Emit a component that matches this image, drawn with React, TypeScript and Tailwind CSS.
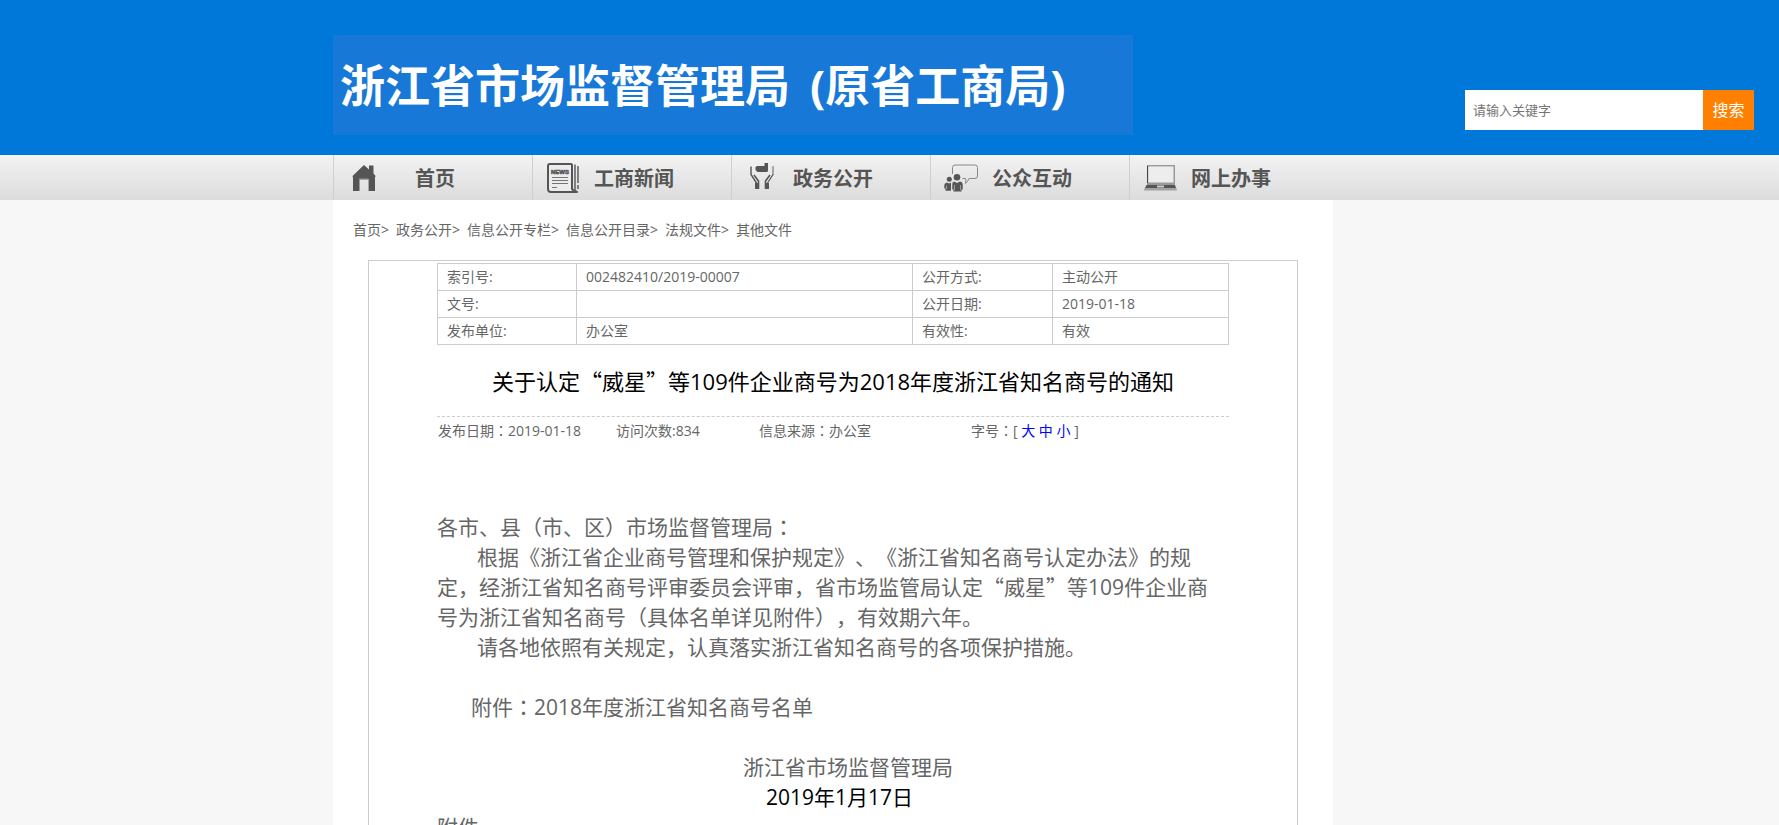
import React from "react";

const SANS = "font-['Open_Sans','Noto_Sans_CJK_SC',sans-serif]";

const HomeIcon = () => (
  <svg width="24" height="26" viewBox="0 0 24 26" fill="#555">
    <path d="M12 0 L17 4.5 V0.5 H21.5 V8.5 L24 11.5 H23 V26 H16.5 V14.5 H7.5 V26 H1 V11.5 H0 Z" />
    <path d="M7 14 H16.5 V26" fill="none" stroke="#aaa" strokeWidth="0.8" />
  </svg>
);

const NewsIcon = () => (
  <svg width="32" height="30" viewBox="0 0 32 30" fill="none" stroke="#555">
    <path d="M3 1 H24 Q25 1 25 2 V26 L28 29 H4 Q1 29 1 26 V3 Q1 1 3 1 Z" strokeWidth="2" fill="#ececec" />
    <path d="M28 1.5 V27 L30 29 M31 3 V20 M31 22 V26 M25 29 H31" strokeWidth="1.4" />
    <path d="M5 14.5 H21 M5 17.5 H21 M5 20.5 H21 M5 24.5 H10" strokeWidth="1.2" stroke="#777" />
    <text
      x="4"
      y="11"
      fontSize="6"
      fontWeight="bold"
      fontFamily="'Liberation Sans', sans-serif"
      fill="#555"
      strokeWidth="0.5"
    >
      NEWS
    </text>
  </svg>
);

const HandsIcon = () => (
  <svg width="24" height="30" viewBox="0 0 24 30" fill="#555">
    <path d="M7 3 H14.5 V0 H18 V8 L17 9 H7.5 L5.5 7 V4 Z" />
    <path d="M5 20 H9.3 V26 H5 Z M14.7 20 H19 V26 H14.7 Z" />
    <path d="M1 3.5 V11.5 L6.5 20" fill="none" stroke="#555" strokeWidth="1.4" />
    <path d="M23 3.5 V11.5 L17.5 20" fill="none" stroke="#555" strokeWidth="1.2" />
    <path d="M23 3 V11" fill="none" stroke="#aaa" strokeWidth="1.6" />
    <path d="M4 12 L8.5 18 V20 M20 12 L15.5 18 V20" fill="none" stroke="#555" strokeWidth="1.6" />
  </svg>
);

const PeopleIcon = () => (
  <svg width="34" height="28" viewBox="0 0 34 28" fill="#555">
    <path
      d="M8.5 10 V3.5 Q8.5 1 11 1 H31 Q33.5 1 33.5 3.5 V12 Q33.5 14.5 31 14.5 H25 Q24 17.5 21.5 19.5 Q22.5 17 21.5 14.5 H18.5"
      fill="none"
      stroke="#888"
    />
    <circle cx="13" cy="13.3" r="3.3" />
    <circle cx="5.3" cy="15.3" r="2.5" />
    <path d="M10 17.5 L13 19 L16 17.5 Q18.7 18 18.7 20 V25.5 H17.5 V27.5 H9.5 V25.5 H8.3 V20 Q8.3 18 10 17.5 Z" />
    <path d="M3 18.5 L5 19.5 L7 18.5 V26.8 H1.5 V24.5 H0.3 V21 Q0.3 19 3 18.5 Z" />
    <path d="M10.5 21 V26 M16.5 21 V26 M2.5 21.5 V25" stroke="#bbb" strokeWidth="0.7" />
  </svg>
);

const LaptopIcon = () => (
  <svg width="33" height="26" viewBox="0 0 33 26">
    <path d="M3 0 H31 V20 H3 Z" fill="#999" />
    <path d="M3 1 H4.2 V18 H3 Z" fill="#444" />
    <path d="M4.2 1.4 H29.5 V17.5 H4.2 Z" fill="#ededed" />
    <path d="M2.5 20 H31 L32 23 H1 Z" fill="#555" />
    <path d="M13 20.5 H20 V22.5 H13 Z" fill="#ccc" />
    <path d="M0.5 23 H32.5 L33 25.5 H0 Z" fill="#a2a2a2" />
  </svg>
);

const navItems = [
  { label: "首页", icon: <HomeIcon /> },
  { label: "工商新闻", icon: <NewsIcon /> },
  { label: "政务公开", icon: <HandsIcon /> },
  { label: "公众互动", icon: <PeopleIcon /> },
  { label: "网上办事", icon: <LaptopIcon /> },
];

const crumbs = ["首页", "政务公开", "信息公开专栏", "信息公开目录", "法规文件", "其他文件"];

const info = [
  ["索引号:", "002482410/2019-00007", "公开方式:", "主动公开"],
  ["文号:", "", "公开日期:", "2019-01-18"],
  ["发布单位:", "办公室", "有效性:", "有效"],
];

// Quotes need the full-width CJK glyphs, colons the centred ones
const Zh = ({ children }: { children: string }) => (
  <>
    {children.split(/([“”：])/).map((part, i) => {
      if (part === "“" || part === "”") {
        return <span key={i} className="font-['Noto_Sans_CJK_SC',sans-serif] leading-none">{part}</span>;
      }
      if (part === "：") {
        return <span key={i} lang="zh-TW" className="font-['Noto_Sans_CJK_TC',sans-serif] leading-none">{part}</span>;
      }
      return part;
    })}
  </>
);

const App = () => {
  return (
    <div lang="zh-CN" className={`min-h-screen bg-[#f7f7f7] text-sm text-[#666] [text-spacing-trim:space-all] ${SANS}`}>
      <header className="relative bg-[#0078d9] pt-[35px] pr-[113px] pb-5">
        <div className="mx-auto w-full max-w-[1000px]">
          <h1 className="flex h-[100px] max-w-[800px] items-center bg-[#1778d8] pt-0.5 pl-[7px] text-[45px] font-bold whitespace-nowrap text-white">
            浙江省市场监督管理局
            <span className="ml-5">(原省工商局)</span>
          </h1>
        </div>
        <form className="absolute top-[90px] right-[25px] flex h-10" onSubmit={(e) => e.preventDefault()}>
          <input
            type="text"
            aria-label="请输入关键字"
            placeholder="请输入关键字"
            className="w-[238px] bg-white px-2 text-[13px] placeholder:text-[#757575]"
          />
          <button type="submit" className="w-[51px] bg-[#ff8000] text-base text-white">搜索</button>
        </form>
      </header>

      <nav className="bg-linear-to-b from-[#f3f3f3] to-[#dcdcdc] pr-[113px]">
        <ul className="mx-auto flex w-full max-w-[1000px]">
          {navItems.map((item) => (
            <li key={item.label} className="w-[199px] border-l border-[#cfcfcf]">
              <a href="#" className="flex h-[45px] items-center pl-3 text-xl font-bold text-[#555]">
                <span className="flex w-9 justify-center">{item.icon}</span>
                <span className="w-[106px] pt-0.5 text-center">{item.label}</span>
              </a>
            </li>
          ))}
        </ul>
      </nav>

      <div className="pr-[113px]">
        <main className="mx-auto w-full max-w-[1000px] bg-white px-[35px] pt-5">
          <div className="-ml-[15px] flex h-5 items-center gap-[7px]">
            {crumbs.map((crumb, i) => (
              <span key={crumb}>
                <a href="#">{crumb}</a>
                {i < crumbs.length - 1 && ">"}
              </span>
            ))}
          </div>

          <article className="mt-5 border border-[#ccc] px-[68px] pt-0.5">
            <table className="w-full table-fixed border-collapse">
              <colgroup>
                <col className="w-[139px]" />
                <col />
                <col className="w-[140px]" />
                <col className="w-[176px]" />
              </colgroup>
              <tbody>
                {info.map((row) => (
                  <tr key={row[0]} className="h-[27px]">
                    {row.map((cell, i) => (
                      <td key={i} className="border border-[#ccc] px-[9px] leading-5">{cell}</td>
                    ))}
                  </tr>
                ))}
              </tbody>
            </table>

            <h2 className="mt-[19px] mb-[18px] text-center text-[22px] leading-[34px] text-black">
              <Zh>关于认定“威星”等109件企业商号为2018年度浙江省知名商号的通知</Zh>
            </h2>

            <div className="flex border-t border-dashed border-[#ccc] px-px pt-1 leading-5">
              <span className="w-[178px]"><Zh>发布日期：2019-01-18</Zh></span>
              <span className="w-[143px]">访问次数:834</span>
              <span className="w-[212px]"><Zh>信息来源：办公室</Zh></span>
              <span>
                <Zh>字号：</Zh>[ <a href="#" className="text-[#00f]">大</a> <a href="#" className="text-[#00f]">中</a>{" "}
                <a href="#" className="text-[#00f]">小</a> ]
              </span>
            </div>

            <div className="mt-[71px] text-[21px] leading-[30px]">
              <p><Zh>各市、县（市、区）市场监督管理局：</Zh></p>
              <p className="indent-10">
                <Zh>根据《浙江省企业商号管理和保护规定》、《浙江省知名商号认定办法》的规定，经浙江省知名商号评审委员会评审，省市场监管局认定“威星”等109件企业商号为浙江省知名商号（具体名单详见附件），有效期六年。</Zh>
              </p>
              <p className="indent-10">请各地依照有关规定，认真落实浙江省知名商号的各项保护措施。</p>
              <p className="mt-[30px] pl-[34px]"><Zh>附件：2018年度浙江省知名商号名单</Zh></p>
              <p className="mt-[30px] pl-[306px]">浙江省市场监督管理局</p>
              <p className="pl-[329px] text-black">2019年1月17日</p>
              <p>附件</p>
            </div>
          </article>
        </main>
      </div>
    </div>
  );
};

export default App;
